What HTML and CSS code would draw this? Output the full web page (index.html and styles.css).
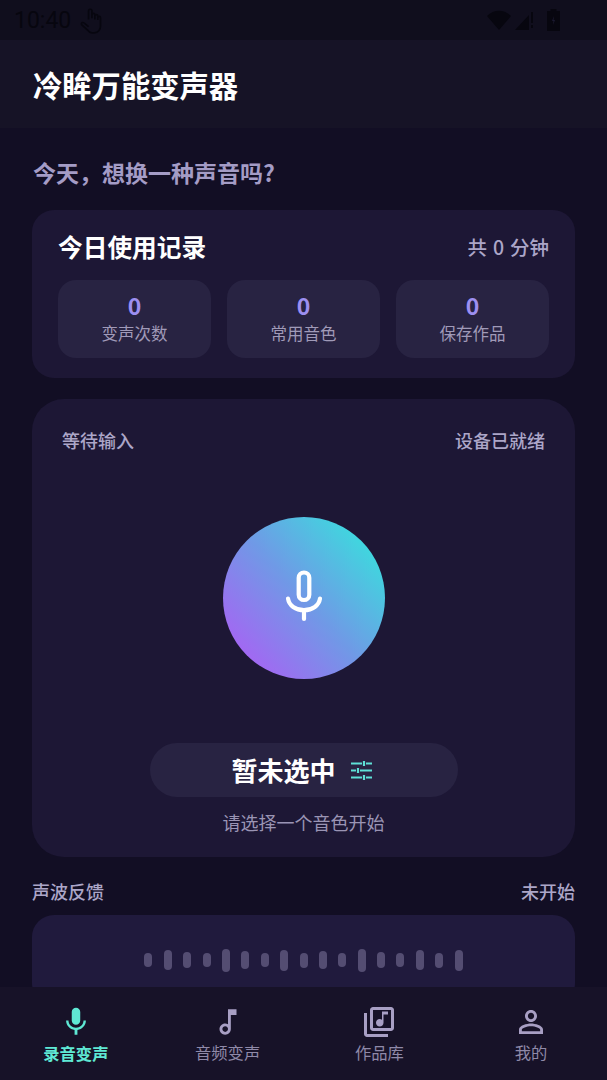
FILE: index.html
```html
<!DOCTYPE html>
<html lang="zh">
  <head>
    <meta charset="utf-8">
    <title>冷眸万能变声器</title>
    <link rel="stylesheet" href="styles.css">
  </head>
  <body>
    <div class="status">
      <div class="status-left">
        <span class="time">10:40</span>
        <svg class="hand" viewBox="0 0 24 24" width="27" height="27"><path d="M8.500 11V3.500a1.500 1.500 0 0 1 3 0V10m0-1V7a1.300 1.300 0 0 1 2.600 0v4m0-3a1.300 1.300 0 0 1 2.600 0v3.500m0-2a1.200 1.200 0 0 1 2.400 0V17c0 3-2 6-5.500 6h-2c-2 0-3-1-4-2.500L2.500 16c-.8-1-.2-2 .6-2.200.8-.2 1.500.2 2.400 1.200l3 2.500"/></svg>
      </div>
      <div class="status-right">
        <svg class="wifi" viewBox="0 0 24 20" width="24" height="20"><path d="M0 6 C7 -1 17 -1 24 6 L12 20 Z"/></svg>
        <svg class="signal" viewBox="0 0 20 20" width="20" height="20"><path d="M0 20 L14 5 V20 Z"/><rect x="16" y="2" width="2" height="11"/><rect x="16" y="15" width="2" height="3"/></svg>
        <svg class="battery" viewBox="0 0 13 22" width="13" height="22"><path d="M3.500 2 V0 H9.500 V2 H13 V22 H0 V2 Z"/><path class="bolt" d="M7 7 L5 12 H6.500 L6 16 L8 11 H6.500 Z"/></svg>
      </div>
    </div>
    <header class="topbar"><h1>冷眸万能变声器</h1></header>

    <main class="content">
      <p class="ask">今天，想换一种声音吗?</p>

      <section class="card today">
        <div class="today-head">
          <h2>今日使用记录</h2>
          <span class="total">共 0 分钟</span>
        </div>
        <div class="stats">
          <div class="stat"><b>0</b><span>变声次数</span></div>
          <div class="stat"><b>0</b><span>常用音色</span></div>
          <div class="stat"><b>0</b><span>保存作品</span></div>
        </div>
      </section>

      <section class="card record">
        <div class="record-head">
          <span>等待输入</span>
          <span>设备已就绪</span>
        </div>
        <div class="mic-btn">
          <svg viewBox="0 0 64 64" width="64" height="64" fill="none" stroke="#fff" stroke-width="4.200" stroke-linecap="round">
            <rect x="26.700" y="6.500" width="10.600" height="27.500" rx="5.300"/>
            <path d="M16 32.500c1 7 7.500 11.700 16 11.700s15-4.700 16-11.700"/>
            <path d="M32 45v8"/>
          </svg>
        </div>
        <div class="voice-pill">
          <strong>暂未选中</strong>
          <svg viewBox="0 0 21 19" width="21" height="19" fill="none" stroke="#5fe0d6" stroke-width="2.200">
            <path d="M0 2.500h11M15 2.500h6M13 0v5"/>
            <path d="M0 9.500h5M9 9.500h12M7 7v5"/>
            <path d="M0 16.500h11M15 16.500h6M13 14v5"/>
          </svg>
        </div>
        <p class="hint">请选择一个音色开始</p>
      </section>

      <div class="wave-head">
        <span>声波反馈</span>
        <span>未开始</span>
      </div>
      <section class="card wave">
        <i style="height:14px"></i><i style="height:20px"></i><i style="height:16px"></i><i style="height:14px"></i><i style="height:23px"></i><i style="height:18px"></i><i style="height:14px"></i><i style="height:21px"></i><i style="height:15px"></i><i style="height:18px"></i><i style="height:14px"></i><i style="height:23px"></i><i style="height:16px"></i><i style="height:14px"></i><i style="height:20px"></i><i style="height:15px"></i><i style="height:21px"></i>
      </section>
    </main>

    <nav class="tabs">
      <a class="tab active">
        <svg viewBox="0 0 24 24" width="34" height="34"><path d="M12 14c1.660 0 2.990-1.340 2.990-3L15 5c0-1.660-1.340-3-3-3S9 3.340 9 5v6c0 1.660 1.340 3 3 3zm5.300-3c0 3-2.540 5.100-5.300 5.100S6.700 14 6.700 11H5c0 3.410 2.720 6.230 6 6.720V21h2v-3.280c3.280-.48 6-3.300 6-6.720h-1.700z"/></svg>
        <span>录音变声</span>
      </a>
      <a class="tab">
        <svg viewBox="0 0 24 24" width="34" height="34"><path d="M12 3l.01 10.550c-.59-.34-1.270-.55-2-.55C7.790 13 6 14.790 6 17s1.790 4 4.010 4S14 19.210 14 17V7h4V3h-6zm-1.990 16c-1.100 0-2-.9-2-2s.9-2 2-2 2 .9 2 2-.9 2-2 2z"/></svg>
        <span>音频变声</span>
      </a>
      <a class="tab">
        <svg viewBox="0 0 24 24" width="36" height="36"><path d="M20 4v12H8V4h12m0-2H8c-1.100 0-2 .9-2 2v12c0 1.100.9 2 2 2h12c1.100 0 2-.9 2-2V4c0-1.100-.9-2-2-2zm-7.500 13c1.380 0 2.500-1.120 2.500-2.500V7h3V5h-4v5.510c-.42-.32-.93-.51-1.500-.51-1.380 0-2.500 1.120-2.500 2.500s1.120 2.500 2.500 2.500zM2 6v14c0 1.100.9 2 2 2h14v-2H4V6H2z"/></svg>
        <span>作品库</span>
      </a>
      <a class="tab">
        <svg viewBox="0 0 24 24" width="36" height="36"><path d="M12 5.900c1.160 0 2.100.94 2.100 2.100s-.94 2.100-2.100 2.100S9.900 9.160 9.900 8s.94-2.100 2.100-2.100m0 9c2.970 0 6.100 1.460 6.100 2.100v1.100H5.900V17c0-.64 3.130-2.100 6.100-2.100M12 4C9.790 4 8 5.790 8 8s1.790 4 4 4 4-1.790 4-4-1.790-4-4-4zm0 9c-2.670 0-8 1.340-8 4v3h16v-3c0-2.660-5.330-4-8-4z"/></svg>
        <span>我的</span>
      </a>
    </nav>
  </body>
</html>
```

FILE: styles.css
```css
* { box-sizing: border-box; }
html, body { height: 100%; }
body {
  margin: 0;
  height: 1080px;
  display: flex;
  flex-direction: column;
  overflow: hidden;
  background-color: #120e24;
  color: #fff;
  font-family: "Noto Sans CJK SC", "Noto Sans", sans-serif; }
h1, h2, p { margin: 0; }

/* status bar */
.status {
  flex: none;
  height: 40px;
  padding: 0 47px 0 14px;
  display: flex;
  justify-content: space-between;
  align-items: center;
  background-color: #100e1d; }
.status-left, .status-right {
  display: flex;
  align-items: center; }
.status-left { gap: 8px; }
.status-right svg { fill: #07060f; }
.signal { margin: 0 12px 0 4px; }
.battery .bolt { fill: #1b1930; }
.time {
  font-family: Roboto, sans-serif;
  font-size: 23px;
  color: #07060f; }
.hand {
  fill: none;
  stroke: #07060f;
  stroke-width: 1.500; }

/* title */
.topbar {
  flex: none;
  height: 88px;
  padding: 0 33px;
  display: flex;
  align-items: center;
  background-color: #161326; }
.topbar h1 {
  font-size: 29.300px;
  font-weight: 700; }

.content {
  flex: 1;
  min-height: 0;
  overflow: hidden;
  padding: 28px 32px 0; }
.ask {
  padding-left: 1px;
  font-size: 23px;
  line-height: 32px;
  font-weight: 700;
  color: #a49cc6; }
.card { background-color: #1d1735; }

/* today */
.today {
  margin-top: 22px;
  height: 168px;
  padding: 18px 26px 20px;
  border-radius: 22px; }
.today-head {
  height: 36px;
  margin-bottom: 16px;
  display: flex;
  justify-content: space-between;
  align-items: center; }
.today-head h2 {
  font-size: 24.700px;
  font-weight: 700; }
.total {
  font-size: 19.500px;
  font-weight: 500;
  word-spacing: 1.500px;
  color: #aca6c8; }
.stats {
  display: grid;
  grid-template-columns: repeat(3, 1fr);
  gap: 16px; }
.stat {
  height: 78px;
  padding-top: 10px;
  display: flex;
  flex-direction: column;
  align-items: center;
  border-radius: 18px;
  background-color: #282342; }
.stat b {
  font-size: 23px;
  line-height: 31px;
  color: #9d8ff0; }
.stat span {
  font-size: 16.500px;
  line-height: 24px;
  color: #a09ab8; }

/* record */
.record {
  margin-top: 21px;
  height: 458px;
  padding: 29px 30px 0;
  display: flex;
  flex-direction: column;
  align-items: center;
  border-radius: 32px; }
.record-head {
  align-self: stretch;
  display: flex;
  justify-content: space-between;
  font-size: 18px;
  line-height: 24px;
  font-weight: 500;
  color: #aca6c8; }
.mic-btn {
  width: 162px;
  height: 162px;
  margin-top: 65px;
  display: flex;
  align-items: center;
  justify-content: center;
  border-radius: 50%;
  background: linear-gradient(48deg, #a565f3 12%, #6f9ae6 50%, #3ddade 88%); }
.voice-pill {
  width: 308px;
  height: 54px;
  margin-top: 64px;
  padding-right: 4px;
  display: flex;
  align-items: center;
  justify-content: center;
  gap: 15px;
  border-radius: 27px;
  background-color: #282342; }
.voice-pill strong {
  padding-bottom: 2px;
  font-size: 26px;
  font-weight: 700; }
.hint {
  margin-top: 12px;
  font-size: 18px;
  line-height: 26px;
  color: #9a94b4; }

/* wave */
.wave-head {
  margin-top: 21px;
  display: flex;
  justify-content: space-between;
  font-size: 18px;
  line-height: 26px;
  font-weight: 500;
  color: #aca6c8; }
.wave {
  margin-top: 11px;
  height: 90px;
  display: flex;
  justify-content: center;
  align-items: center;
  gap: 11.400px;
  border-radius: 22px;
  background-color: #201a3d; }
.wave i {
  width: 8px;
  border-radius: 4px;
  background-color: #544d72; }

/* bottom tabs */
.tabs {
  flex: none;
  height: 93px;
  padding-top: 18px;
  display: grid;
  grid-template-columns: repeat(4, 1fr);
  grid-template-rows: 34px 24px;
  background-color: #171228; }
.tab {
  display: grid;
  grid-row: span 2;
  grid-template-rows: subgrid;
  justify-items: center;
  align-items: center;
  font-size: 16.300px;
  line-height: 24px;
  color: #8f89a8; }
.tab svg { fill: #a89fc4; }
.tab span {
  margin-top: 2px;
  grid-row: 2; }
.tab.active {
  font-weight: 700;
  color: #5fe8d4; }
.tab.active span { margin-top: 4px; }
.tab.active svg { fill: #5fe8d4; }
```
